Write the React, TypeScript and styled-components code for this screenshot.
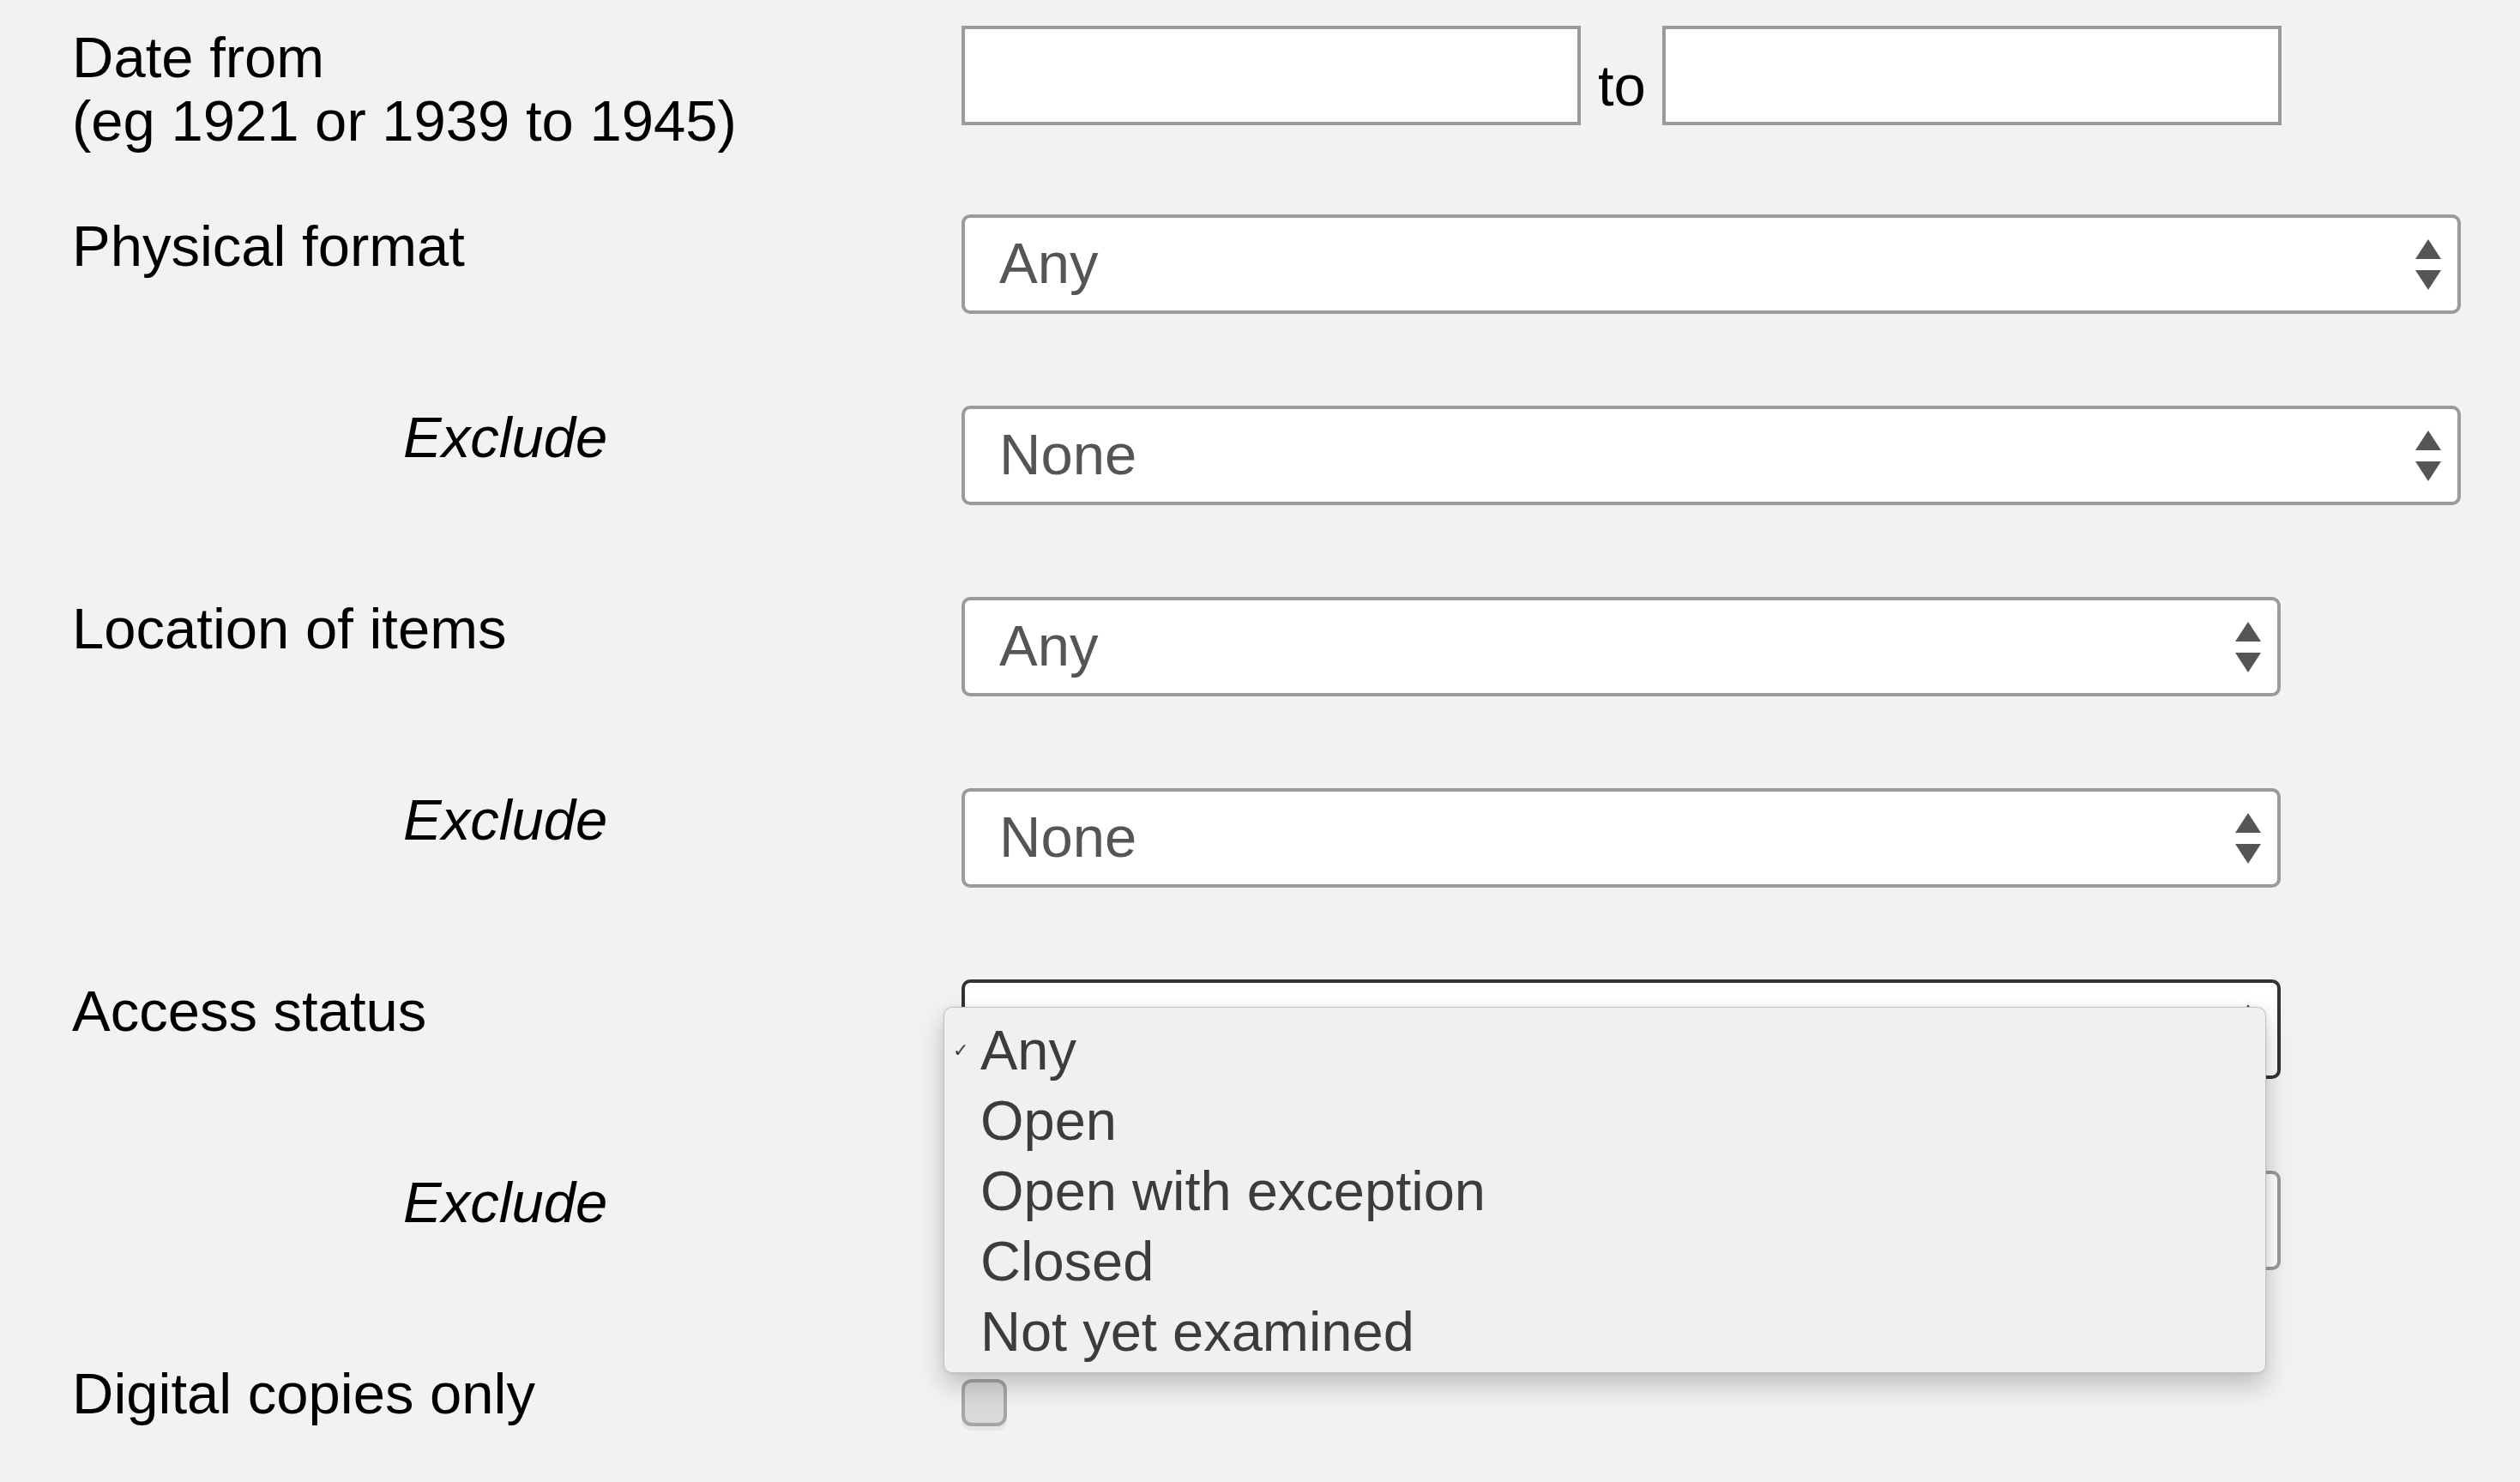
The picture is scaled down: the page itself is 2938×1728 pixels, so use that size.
import styled, { createGlobalStyle } from 'styled-components';

const GlobalStyle = createGlobalStyle`
	html,
	body {
		margin: 0;
		min-height: 100%;
		background: #f2f2f2;
	}
	body {
		font-family: 'Liberation Sans', Arial, Helvetica, sans-serif;
		color: #000;
	}
`;

const accessOptions = ['Any', 'Open', 'Open with exception', 'Closed', 'Not yet examined'];

const Arrows = () => (
	<svg width="30" height="59" viewBox="0 0 30 59">
		<polygon points="15,0 30,23 0,23" fill="#555" />
		<polygon points="0,36 30,36 15,59" fill="#555" />
	</svg>
);

type SelectProps = { value: string; width: number; focused?: boolean; children?: React.ReactNode };

const Select = ({ value, width, focused, children }: SelectProps) => (
	<SelectWrap>
		<SelectBox $width={width} $focused={focused}>
			<span>{value}</span>
			<Arrows />
		</SelectBox>
		{children}
	</SelectWrap>
);

const App = () => {
	return (
		<>
			<GlobalStyle />
			<Form>
				<Row $space={72}>
					<Label>
						Date from
						<br />
						(eg 1921 or 1939 to 1945)
					</Label>
					<DateRange>
						<TextInput />
						<ToWord>to</ToWord>
						<TextInput />
					</DateRange>
				</Row>

				<Row>
					<Label>Physical format</Label>
					<Select value="Any" width={1748} />
				</Row>
				<Row>
					<Label $indent>Exclude</Label>
					<Select value="None" width={1748} />
				</Row>

				<Row>
					<Label>Location of items</Label>
					<Select value="Any" width={1538} />
				</Row>
				<Row>
					<Label $indent>Exclude</Label>
					<Select value="None" width={1538} />
				</Row>

				<Row>
					<Label>Access status</Label>
					<Select value="Any" width={1538} focused>
						<Menu>
							{accessOptions.map((opt, i) => (
								<MenuItem key={opt}>
									<Check>{i === 0 ? '✓' : ''}</Check>
									{opt}
								</MenuItem>
							))}
						</Menu>
					</Select>
				</Row>
				<Row>
					<Label $indent>Exclude</Label>
					<Select value="None" width={1538} />
				</Row>

				<Row $space={0}>
					<Label>Digital copies only</Label>
					<Checkbox />
				</Row>
			</Form>
		</>
	);
};

export default App;

const Form = styled.div`
	padding: 30px 0 40px 84px;
	font-size: 67px;
`;

const Row = styled.div<{ $space?: number }>`
	display: flex;
	align-items: flex-start;
	min-height: 116px;
	margin-bottom: ${(p) => (p.$space ?? 107)}px;
`;

const Label = styled.div<{ $indent?: boolean }>`
	width: 1037px;
	flex-shrink: 0;
	box-sizing: border-box;
	padding-left: ${(p) => (p.$indent ? 386 : 0)}px;
	font-size: 67px;
	line-height: 74px;
	font-style: ${(p) => (p.$indent ? 'italic' : 'normal')};
	color: #000;
`;

// 날짜 입력
const DateRange = styled.div`
	display: flex;
	align-items: flex-start;
`;

const TextInput = styled.div`
	width: 722px;
	height: 116px;
	box-sizing: border-box;
	background: #fff;
	border: 4px solid #9a9a9a;
`;

const ToWord = styled.span`
	margin: 32px 19px 0 20px;
	font-size: 67px;
	line-height: 76px;
`;

// 셀렉트 박스
const SelectWrap = styled.div`
	position: relative;
`;

const SelectBox = styled.div<{ $width: number; $focused?: boolean }>`
	width: ${(p) => p.$width}px;
	height: 116px;
	box-sizing: border-box;
	display: flex;
	align-items: center;
	justify-content: space-between;
	padding: 0 19px 0 40px;
	background: #fff;
	border: 4px solid ${(p) => (p.$focused ? '#333' : '#9b9b9b')};
	border-radius: 10px;
	color: #555;
	font-size: 67px;
	line-height: 76px;
	& > span {
		padding-bottom: 3px;
	}
`;

const Menu = styled.div`
	position: absolute;
	left: -21px;
	top: 32px;
	width: 1542px;
	box-sizing: border-box;
	padding: 9px 0 6px;
	background: #f0f0f0;
	border: 1px solid #c2c2c2;
	border-radius: 10px;
	box-shadow: 0 14px 30px rgba(0, 0, 0, 0.22), 0 0 4px rgba(0, 0, 0, 0.08);
	z-index: 10;
`;

const MenuItem = styled.div`
	display: flex;
	align-items: center;
	height: 82px;
	font-size: 65px;
	line-height: 82px;
	color: #3c3c3c;
`;

const Check = styled.span`
	width: 42px;
	flex-shrink: 0;
	box-sizing: border-box;
	padding-left: 10px;
	font-family: 'DejaVu Sans', sans-serif;
	font-size: 22px;
	line-height: 22px;
	color: #3c3c3c;
`;

const Checkbox = styled.div`
	width: 53px;
	height: 55px;
	margin-top: 20px;
	box-sizing: border-box;
	background: #d9d9d9;
	border: 4px solid #a6a6a6;
	border-radius: 12px;
	box-shadow: 0 5px 0 rgba(0, 0, 0, 0.05);
`;
